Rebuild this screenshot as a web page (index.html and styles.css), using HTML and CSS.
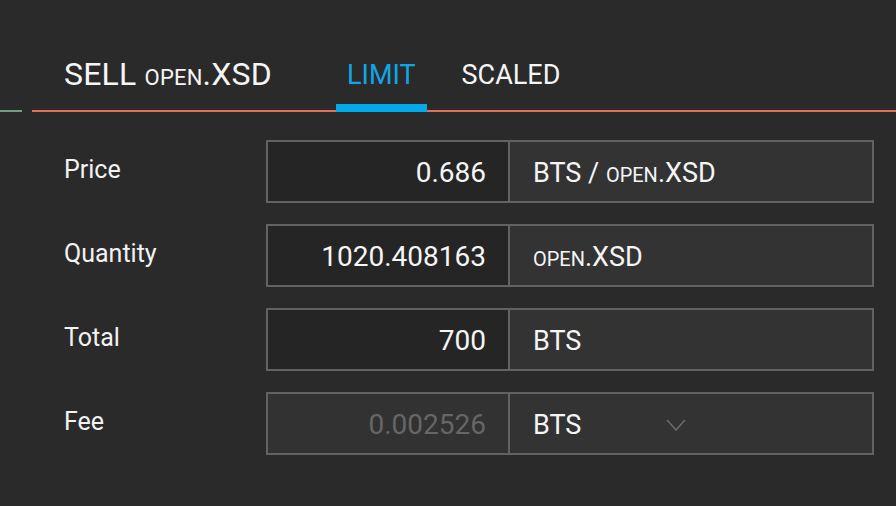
FILE: index.html
```html
<!DOCTYPE html>
<html lang="en">
<head>
    <meta charset="UTF-8">
    <meta name="viewport" content="width=device-width, initial-scale=1.0">
    <title>Sell open.XSD</title>
    <link rel="stylesheet" href="styles.css">
</head>
<body>

    <div id="exchange">
        <div class="buy-edge"></div>

        <div class="sell-panel">
            <div class="panel-header">
                <div class="panel-title">SELL <span class="prefix">open</span>.XSD</div>
                <div class="tab active">LIMIT</div>
                <div class="tab">SCALED</div>
            </div>

            <form class="order-form">
                <div class="form-row">
                    <label for="price">Price</label>
                    <div class="field">
                        <input type="text" id="price" value="0.686">
                        <div class="unit">BTS / <span class="prefix">open</span>.XSD</div>
                    </div>
                </div>
                <div class="form-row">
                    <label for="quantity">Quantity</label>
                    <div class="field">
                        <input type="text" id="quantity" value="1020.408163">
                        <div class="unit"><span class="prefix">open</span>.XSD</div>
                    </div>
                </div>
                <div class="form-row">
                    <label for="total">Total</label>
                    <div class="field">
                        <input type="text" id="total" value="700">
                        <div class="unit">BTS</div>
                    </div>
                </div>
                <div class="form-row">
                    <label for="fee">Fee</label>
                    <div class="field">
                        <input type="text" id="fee" value="0.002526" disabled>
                        <div class="unit select">BTS<svg class="chevron" width="20" height="12" viewBox="0 0 20 12"><polyline points="1,1 10,11 19,1" fill="none" stroke="#6a6a6a" stroke-width="1.6"/></svg></div>
                    </div>
                </div>
            </form>
        </div>
    </div>

</body>
</html>
```

FILE: styles.css
```css
body {
    margin: 0;
    padding: 0;
    background-color: #2a2a2a;
    color: #f2f2f2;
    font-family: Roboto, 'Liberation Sans', sans-serif;
    height: 100vh;
    overflow: hidden;
}

#exchange {
    display: flex;
    gap: 10px;
}

/* neighbouring buy panel, only its edge shows */
.buy-edge {
    width: 22px;
    height: 110px;
    border-bottom: 2px solid #6f9e7e;
}

.sell-panel {
    flex: 1;
}

.panel-header {
    display: flex;
    align-items: flex-start;
    padding: 58px 0 0 32px;
    border-bottom: 2px solid #e07058;
}

.panel-title {
    width: 272px;
    font-size: 32px;
    line-height: 32px;
    letter-spacing: 0.2px;
    color: #f5f5f5;
}

.panel-title .prefix {
    font-size: 22px;
}

.prefix {
    text-transform: uppercase;
    font-size: 0.74em;
}

.tab {
    font-size: 27px;
    line-height: 32px;
    padding: 1px 11px 13px;
    margin-bottom: -2px;
    margin-right: 24px;
    border-bottom: 8px solid transparent;
    color: #f5f5f5;
}

.tab.active {
    color: #12a5e6;
    border-bottom-color: #03a9e8;
}

.order-form {
    padding: 28px 22px 0 32px;
    display: flex;
    flex-direction: column;
    gap: 21px;
}

.form-row {
    display: flex;
    align-items: center;
    height: 63px;
}

label {
    width: 202px;
    font-size: 25px;
    margin-top: -4px;
}

.field {
    flex: 1;
    display: flex;
    height: 63px;
}

input {
    width: 244px;
    box-sizing: border-box;
    border: 2px solid #626262;
    background-color: #252525;
    color: #f5f5f5;
    font-family: Roboto, 'Liberation Sans', sans-serif;
    font-size: 28px;
    text-align: right;
    padding: 2px 22px 0 10px;
    margin: 0;
    outline: none;
}

input:disabled {
    background-color: #323232;
    color: #666;
}

.unit {
    flex: 1;
    box-sizing: border-box;
    border: 2px solid #626262;
    border-left: none;
    background-color: #333;
    padding-left: 23px;
    font-size: 27px;
    line-height: 62px;
    color: #f5f5f5;
    white-space: nowrap;
}

.chevron {
    margin-left: 85px;
    vertical-align: middle;
    position: relative;
    top: -2px;
}
```
